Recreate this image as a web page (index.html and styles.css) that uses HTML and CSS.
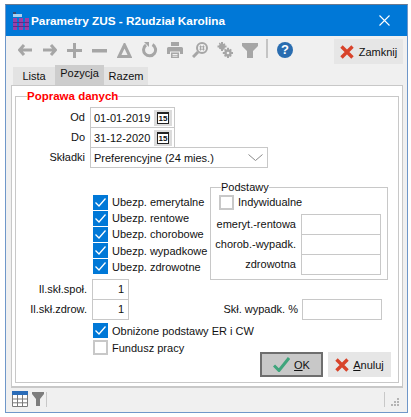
FILE: index.html
```html
<!DOCTYPE html>
<html lang="pl">
<head>
<meta charset="utf-8">
<title>Parametry ZUS</title>
<link rel="stylesheet" href="styles.css">
</head>
<body>
<div class="window">
  <header class="titlebar">
    <svg class="app-icon" width="16" height="18" viewBox="0 0 16 18">
      <rect x="0" y="6" width="4" height="12" fill="#9a3fa8"/><rect x="6" y="6" width="4" height="12" fill="#9a3fa8"/><rect x="12" y="6" width="4" height="12" fill="#9a3fa8"/>
      <rect x="0" y="10" width="16" height="1" fill="#5a2f88"/><rect x="0" y="14" width="16" height="1" fill="#5a2f88"/>
      <rect x="0" y="2" width="9" height="3" fill="#a8d0f0"/><rect x="0" y="0" width="3" height="2" fill="#3a4a70"/>
    </svg>
    <span class="title">Parametry ZUS - R2udział Karolina</span>
    <svg class="close-x" width="11" height="11" viewBox="0 0 11 11"><path d="M.5.5l10 10M10.5.5l-10 10" stroke="#fff" stroke-width="1.1" fill="none"/></svg>
  </header>

  <div class="toolbar">
    <span class="tool"><svg width="14" height="12" viewBox="0 0 14 12"><path d="M6 1L1.500 6 6 11M2 6h12" fill="none" stroke="#a6a6a6" stroke-width="3"/></svg></span>
    <span class="tool"><svg width="14" height="12" viewBox="0 0 14 12"><path d="M8 1l4.500 5L8 11M12 6H0" fill="none" stroke="#a6a6a6" stroke-width="3"/></svg></span>
    <span class="tool"><svg width="15" height="15" viewBox="0 0 15 15"><path d="M6 0h3v6h6v3H9v6H6V9H0V6h6z" fill="#a6a6a6"/></svg></span>
    <span class="tool"><svg width="15" height="15" viewBox="0 0 15 15"><rect y="6" width="15" height="3.500" fill="#a6a6a6"/></svg></span>
    <span class="tool"><svg width="15" height="15" viewBox="0 0 15 15"><path d="M7.500 2L13 13.500H2z" fill="none" stroke="#a6a6a6" stroke-width="3"/></svg></span>
    <span class="tool"><svg width="16" height="16" viewBox="0 0 16 16"><path d="M10.500 2.600A6 6 0 1 1 4 3" fill="none" stroke="#a6a6a6" stroke-width="3"/><path d="M2 0h5v5z" fill="#a6a6a6"/></svg></span>
    <span class="tool"><svg width="16" height="16" viewBox="0 0 16 16"><path d="M4 0h8v4H4z" fill="#a6a6a6"/><path d="M1.500 5h13A1.500 1.500 0 0 1 16 6.500V12h-3V9.500H3V12H0V6.500A1.500 1.500 0 0 1 1.500 5z" fill="#a6a6a6"/><path d="M4 10.500h8V16H4z" fill="#a6a6a6"/><path d="M5.500 12.500h5M5.500 14.200h5" stroke="#f0f0f0"/></svg></span>
    <span class="tool"><svg width="16" height="16" viewBox="0 0 16 16"><circle cx="10" cy="6" r="5" fill="none" stroke="#a6a6a6" stroke-width="2"/><path d="M6 10l-5 5" stroke="#a6a6a6" stroke-width="3"/><path d="M8.500 3.500v5M11.500 3.500v5M7.500 4.800h5M7.500 7.200h5" stroke="#a6a6a6"/></svg></span>
    <span class="tool"><svg width="16" height="16" viewBox="0 0 16 16"><g fill="#a6a6a6"><circle cx="5" cy="4.500" r="3"/><path d="M4 0h2v9H4zM.5 3.500h9v2h-9zM1.800 1.500l1-1 5 6.500-1 1zM7.500 1.200l1 1-5.500 5-1-1z"/><circle cx="11" cy="11" r="3.700"/><path d="M10 5.800h2v10.200h-2zM5.800 10h10.200v2H5.800zM7 8l1.300-1.300 6.500 7-1.300 1.300zM13.600 6.800l1.300 1.300-6.700 6.800L7 13.700z"/></g><circle cx="11" cy="11" r="1.300" fill="#f0f0f0"/></svg></span>
    <span class="tool"><svg width="16" height="15" viewBox="0 0 16 15"><path d="M0 0h16v3l-5 5v7H5V8L0 3z" fill="#a6a6a6"/></svg></span>
    <span class="tool-sep"></span>
    <span class="help">?</span>
    <button class="btn btn-close" type="button">
      <svg width="14" height="14" viewBox="0 0 14 14"><path d="M1.500 1.500l11 11M12.500 1.500l-11 11" stroke="#d8432a" stroke-width="3.400"/></svg>
      <span>Zamknij</span>
    </button>
  </div>

  <nav class="tabs">
    <span class="tab tab-lista">Lista</span>
    <span class="tab tab-active">Pozycja</span>
    <span class="tab tab-razem">Razem</span>
  </nav>

  <main class="panel">
    <fieldset class="group">
      <legend class="group-title">Poprawa danych</legend>

      <div class="row"><label class="lab lab-main">Od</label><div class="input date"><span>01-01-2019</span><span class="cal"><span class="cal-face">15</span></span></div></div>
      <div class="row"><label class="lab lab-main">Do</label><div class="input date"><span>31-12-2020</span><span class="cal"><span class="cal-face">15</span></span></div></div>
      <div class="row"><label class="lab lab-main">Składki</label><div class="input select"><span>Preferencyjne (24 mies.)</span>
        <svg width="15" height="7" viewBox="0 0 15 7"><path d="M.5.500l7 6 7-6" fill="none" stroke="#8a8a8a"/></svg></div></div>

      <div class="middle">
        <div class="checks">
          <div class="check"><span class="box on"><svg width="15" height="15" viewBox="0 0 15 15"><path d="M2.500 7.500l3.500 3.500 6.500-7.500" fill="none" stroke="#fff" stroke-width="1.300"/></svg></span>Ubezp. emerytalne</div>
          <div class="check"><span class="box on"><svg width="15" height="15" viewBox="0 0 15 15"><path d="M2.500 7.500l3.500 3.500 6.500-7.500" fill="none" stroke="#fff" stroke-width="1.300"/></svg></span>Ubezp. rentowe</div>
          <div class="check"><span class="box on"><svg width="15" height="15" viewBox="0 0 15 15"><path d="M2.500 7.500l3.500 3.500 6.500-7.500" fill="none" stroke="#fff" stroke-width="1.300"/></svg></span>Ubezp. chorobowe</div>
          <div class="check"><span class="box on"><svg width="15" height="15" viewBox="0 0 15 15"><path d="M2.500 7.500l3.500 3.500 6.500-7.500" fill="none" stroke="#fff" stroke-width="1.300"/></svg></span>Ubezp. wypadkowe</div>
          <div class="check"><span class="box on"><svg width="15" height="15" viewBox="0 0 15 15"><path d="M2.500 7.500l3.500 3.500 6.500-7.500" fill="none" stroke="#fff" stroke-width="1.300"/></svg></span>Ubezp. zdrowotne</div>
        </div>
        <fieldset class="sub">
          <legend class="sub-title">Podstawy</legend>
          <div class="check check-ind"><span class="box"></span>Indywidualne</div>
          <div class="row"><label class="lab lab-sub">emeryt.-rentowa</label><div class="input wide"></div></div>
          <div class="row"><label class="lab lab-sub">chorob.-wypadk.</label><div class="input wide"></div></div>
          <div class="row"><label class="lab lab-sub">zdrowotna</label><div class="input wide"></div></div>
        </fieldset>
      </div>

      <div class="row"><label class="lab lab-il">Il.skł.społ.</label><div class="input num">1</div></div>
      <div class="row"><label class="lab lab-il">Il.skł.zdrow.</label><div class="input num">1</div>
        <label class="lab lab-wyp">Skł. wypadk. %</label><div class="input wide"></div></div>

      <div class="bottom">
        <div class="checks checks-low">
          <div class="check"><span class="box on"><svg width="15" height="15" viewBox="0 0 15 15"><path d="M2.500 7.500l3.500 3.500 6.500-7.500" fill="none" stroke="#fff" stroke-width="1.300"/></svg></span>Obniżone podstawy ER i CW</div>
          <div class="check"><span class="box"></span>Fundusz pracy</div>
        </div>
        <div class="actions">
          <button class="btn btn-ok" type="button">
            <svg width="17" height="15" viewBox="0 0 17 15"><path d="M1 8.500l5 5L16 1" fill="none" stroke="#3fa57c" stroke-width="3"/></svg>
            <span><u>O</u>K</span>
          </button>
          <button class="btn btn-cancel" type="button">
            <svg width="14" height="14" viewBox="0 0 14 14"><path d="M1.500 1.500l11 11M12.500 1.500l-11 11" stroke="#d8432a" stroke-width="3.400"/></svg>
            <span><u>A</u>nuluj</span>
          </button>
        </div>
      </div>
    </fieldset>
  </main>

  <footer class="status">
    <svg width="16" height="16" viewBox="0 0 16 16"><rect width="16" height="16" fill="#fff"/><rect width="16" height="4" fill="#2a6cb8"/><path d="M.5 4v11.500h15V4M5.500 4v12M10.500 4v12M0 8h16M0 11.800h16" fill="none" stroke="#7a7a7a"/></svg>
    <svg class="status-funnel" width="12" height="14" viewBox="0 0 12 14"><path d="M0 0h12v2L8 7v7H4V7L0 2z" fill="#7d7d7d"/></svg>
    <span class="status-sep"></span>
    <span class="status-sep status-sep-end"></span>
    <svg class="grip" width="8" height="8" viewBox="0 0 8 8"><path d="M6 0h2v2H6zM3 3h2v2H3zM6 3h2v2H6zM0 6h2v2H0zM3 6h2v2H3zM6 6h2v2H6z" fill="#b4b4b4"/></svg>
  </footer>
</div>
</body>
</html>
```

FILE: styles.css
```css
* { box-sizing: border-box; }

html, body { margin: 0; padding: 0; background: #fff; }

body {
  width: 411px;
  height: 417px;
  overflow: hidden;
  font-family: "Liberation Sans", Arial, sans-serif;
  font-size: 11px;
  color: #111;
}

.window {
  margin: 4px 0 0 5px;
  width: 403px;
  height: 409px;
  display: flex;
  flex-direction: column;
  background: #f0f0f0;
  border: 1px solid #6f97c9;
  border-top-color: #6b7a90;
}

.titlebar {
  height: 31px;
  flex: none;
  display: flex;
  align-items: center;
  background: #0078d7;
  color: #fff;
  padding: 0 0 0 7px;
}

.app-icon { flex: none; margin-right: 2px; }

.title { font-weight: 700; font-size: 11.8px; white-space: nowrap; }

.close-x { margin-left: auto; margin-right: 17px; }

.toolbar {
  height: 29px;
  flex: none;
  display: flex;
  align-items: flex-start;
  padding: 3px 4px 0 6px;
}

.tool {
  width: 25px;
  height: 22px;
  display: flex;
  align-items: center;
  justify-content: center;
}

.tool-sep {
  width: 2px;
  height: 19px;
  margin-left: 4px;
  background: #c4c4c4;
}

.help {
  width: 16px;
  height: 16px;
  margin: 3px 0 0 9px;
  border-radius: 50%;
  background: #2a6db0;
  color: #fff;
  font-weight: 700;
  font-size: 13px;
  line-height: 16px;
  text-align: center;
}

.btn {
  height: 25px;
  border: 0;
  padding: 0;
  display: flex;
  align-items: center;
  justify-content: center;
  gap: 4px;
  font: inherit;
  color: #111;
  background: #e6e6e6;
}

.btn-close { width: 69px; margin-left: auto; gap: 5px; }

.tabs {
  height: 20px;
  flex: none;
  display: flex;
  align-items: flex-end;
  padding-left: 7px;
}

.tab {
  height: 18px;
  line-height: 18px;
  text-align: center;
  background: #e3e3e3;
}

.tab-lista { width: 42px; }
.tab-razem { width: 44px; }

.tab-active {
  width: 49px;
  height: 20px;
  line-height: 17px;
  background: #cdcdcd;
}

.panel {
  flex: none;
  height: 303px;
  margin: 0 4px 0 5px;
  padding: 0 3px;
  background: #fff;
  border: 1px solid #c8c8c8;
  border-bottom-width: 2px;
}

.group {
  height: 294px;
  margin: 3px 0 0;
  padding: 4px 0 0;
  min-width: 0;
  border: 1px solid #c8c8c8;
  display: block;
}

.group-title {
  margin-left: 11px;
  padding: 0;
  color: #f00;
  font-weight: 700;
  font-size: 11.5px;
  line-height: 14px;
}

.row {
  display: flex;
  align-items: center;
  height: 20px;
}

.lab { text-align: right; white-space: nowrap; flex: none; }
.lab-main { width: 69px; margin-right: 5px; }
.lab-il { width: 71px; margin-right: 5px; }
.lab-sub { width: 85px; margin-right: 5px; }
.lab-wyp { width: 169px; margin-right: 4px; }

.input {
  height: 21px;
  border: 1px solid #c8c8c8;
  background: #fff;
  margin-bottom: -1px;
  flex: none;
  white-space: nowrap;
}

.date {
  width: 85px;
  display: flex;
  align-items: center;
  justify-content: space-between;
  padding: 0 2px 0 3px;
}

.cal {
  width: 18px;
  height: 16px;
  background: #dcdcdc;
  display: flex;
  align-items: center;
  justify-content: center;
}

.cal-face {
  width: 12px;
  height: 12px;
  background: #fff;
  border: 1px solid #222;
  border-top-width: 2px;
  font-size: 8px;
  font-weight: 700;
  line-height: 9px;
  text-align: center;
}

.select {
  width: 178px;
  display: flex;
  align-items: center;
  justify-content: space-between;
  padding: 0 4px 0 3px;
}

.wide { width: 80px; }

.num {
  width: 37px;
  padding-right: 4px;
  text-align: right;
  line-height: 19px;
}

.middle {
  display: flex;
  height: 92px;
  margin-top: 20px;
}

.checks {
  margin: 7px 0 0 77px;
  width: 117px;
  flex: none;
}

.check {
  display: flex;
  align-items: center;
  gap: 4px;
  height: 16.2px;
  white-space: nowrap;
}

.box {
  width: 15px;
  height: 15px;
  flex: none;
  border: 2px solid #c8c8c8;
  background: #fff;
}

.box.on {
  border: 0;
  background: #0078d7;
  display: block;
}

.box svg { display: block; }

.sub {
  margin: -7px 0 0;
  padding: 0;
  width: 178px;
  height: 100px;
  min-width: 0;
  border: 1px solid #c8c8c8;
}

.sub-title {
  margin-left: 10px;
  padding: 0;
  line-height: 14px;
}

.check-ind { margin: 0 0 4px 8px; height: 16px; }

.bottom {
  display: flex;
  align-items: flex-end;
  justify-content: space-between;
  height: 55px;
  margin-top: 3px;
  padding-right: 7px;
}

.checks-low {
  margin: 0 0 0 77px;
  align-self: flex-start;
  width: auto;
}

.checks-low .check { height: 17px; }

.actions { display: flex; gap: 5px; }

.btn-ok {
  width: 63px;
  background: #c8c8c8;
  border: 2px solid #6e6e6e;
}

.btn-cancel { width: 63px; }

.status {
  flex: 1;
  display: flex;
  align-items: center;
  padding: 0 5px 2px 6px;
}

.status-funnel { margin-left: 4px; }

.status-sep {
  width: 1px;
  height: 15px;
  margin-left: 2px;
  background: #c8c8c8;
}

.status-sep-end { margin-left: auto; }

.grip { margin: 6px 3px 0 6px; }
```
